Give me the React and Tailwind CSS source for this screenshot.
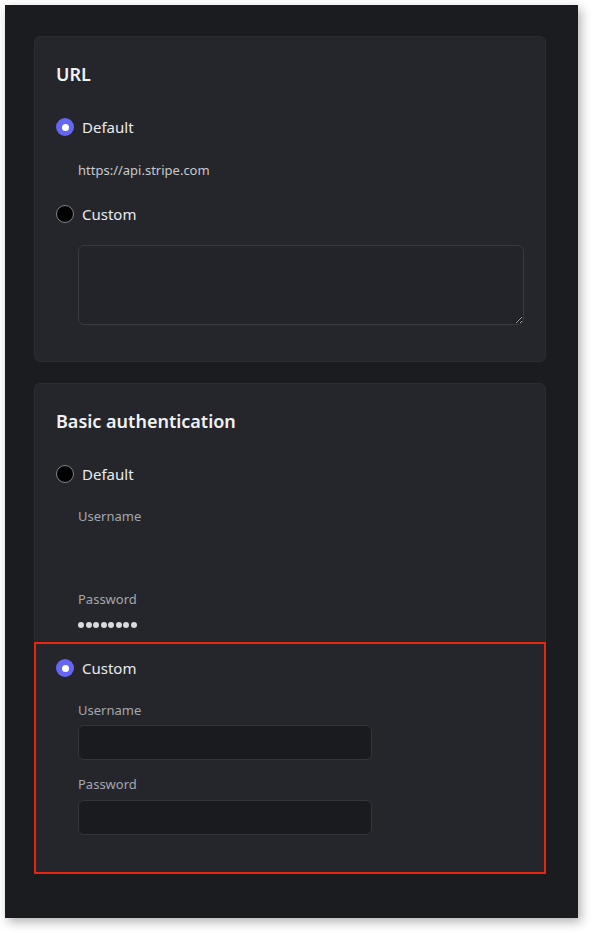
import React from 'react';

const font = { fontFamily: '"Noto Sans", "Open Sans", sans-serif' };

function Radio({ checked, label }) {
  return (
    <div className="flex h-[20px] items-center gap-[8px]">
      {checked ? (
        <span className="flex h-[18px] w-[18px] items-center justify-center rounded-full bg-[#6466f4]">
          <span className="h-[7px] w-[7px] rounded-full bg-white" />
        </span>
      ) : (
        <span className="h-[18px] w-[18px] rounded-full border border-[#80838c] bg-black" />
      )}
      <span className="text-[15px] leading-[20px] text-[#e9eaed]">{label}</span>
    </div>
  );
}

function Label({ children, className = '' }) {
  return <div className={`ml-[22px] text-[13px] leading-[18px] text-[#a4a7ae] ${className}`}>{children}</div>;
}

function Dots() {
  return (
    <div className="ml-[22px] mt-[8px] flex h-[18px] items-center gap-[1.5px]">
      {[0, 1, 2, 3, 4, 5, 6, 7].map((i) => (
        <span key={i} className="h-[6px] w-[6px] rounded-full bg-[#d9dadd]" />
      ))}
    </div>
  );
}

export default function App() {
  return (
    <div className="h-[933px] w-[594px] bg-white pl-[5px] pt-[5px]" style={font}>
      <div className="h-[913px] w-[573px] bg-[#1a1c20] pl-[29px] pr-[32px] pt-[31px] shadow-[3px_4px_10px_rgba(0,0,0,0.3)]">
        {/* URL card */}
        <div className="rounded-[6px] border border-[#2c2d33] bg-[#25262b] px-[21px] pb-[36px] pt-[25px]">
          <h2 className="text-[18px] font-semibold leading-[24px] text-[#f1f2f4]">URL</h2>
          <div className="mt-[31px]">
            <Radio checked label="Default" />
          </div>
          <div className="ml-[22px] mt-[24px] text-[13px] leading-[18px] text-[#c7c9ce]">https://api.stripe.com</div>
          <div className="mt-[25px]">
            <Radio label="Custom" />
          </div>
          <textarea className="ml-[22px] mt-[21px] block h-[80px] w-[446px] resize-y rounded-[6px] border border-[#3a3b41] bg-[#232429] outline-none" />
        </div>

        {/* Basic authentication card */}
        <div className="mt-[21px] rounded-[6px] border border-[#2c2d33] bg-[#25262b]">
          <div className="px-[21px] pb-[8px] pt-[25px]">
            <h2 className="text-[18px] font-semibold leading-[24px] text-[#f1f2f4]">Basic authentication</h2>
            <div className="mt-[31px]">
              <Radio label="Default" />
            </div>
            <Label className="mt-[23px]">Username</Label>
            <Label className="mt-[65px]">Password</Label>
            <Dots />
          </div>
          <div className="-mx-px -mb-px border-2 border-[#e8260f] px-[20px] pb-[37px] pt-[14px]">
            <Radio checked label="Custom" />
            <Label className="mt-[23px]">Username</Label>
            <input className="ml-[22px] mt-[6px] block h-[35px] w-[294px] rounded-[6px] border border-[#34353b] bg-[#1a1b1f] outline-none" />
            <Label className="mt-[15px]">Password</Label>
            <input
              type="password"
              className="ml-[22px] mt-[7px] block h-[35px] w-[294px] rounded-[6px] border border-[#34353b] bg-[#1a1b1f] outline-none"
            />
          </div>
        </div>
      </div>
    </div>
  );
}
